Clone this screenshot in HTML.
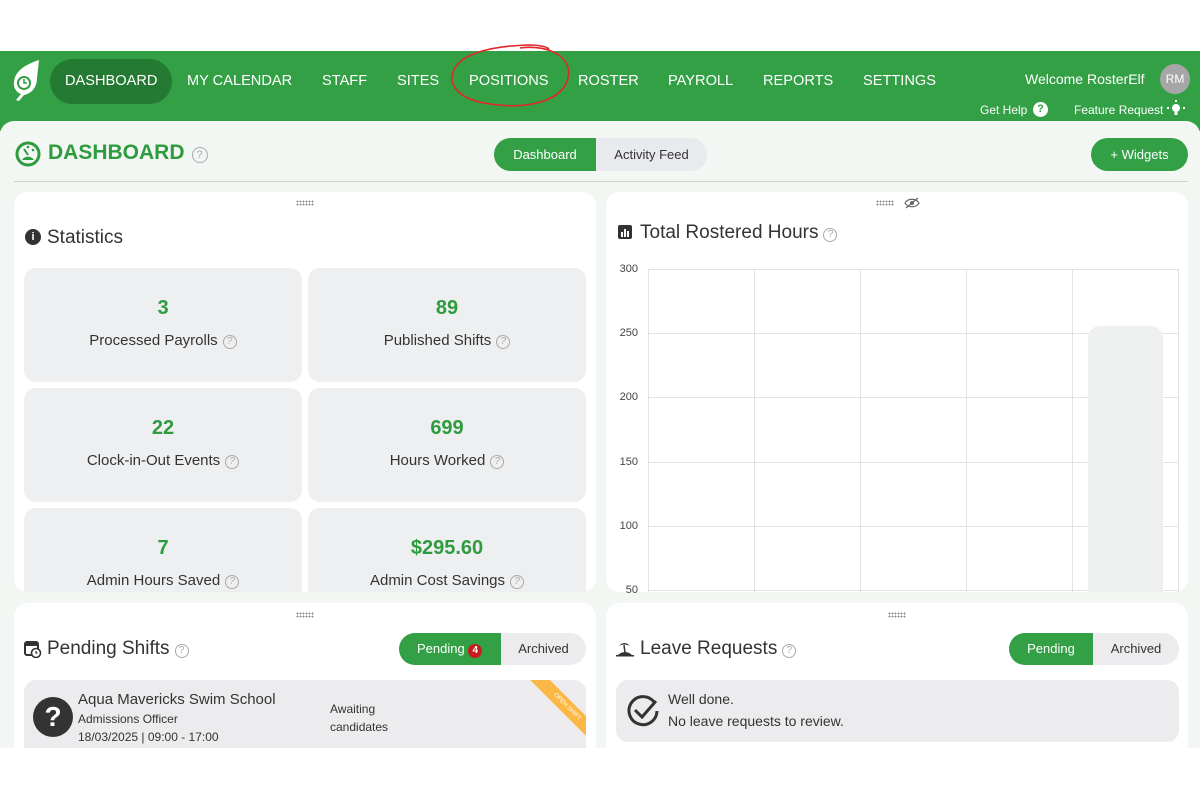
<!DOCTYPE html>
<html><head><meta charset="utf-8"><style>
*{box-sizing:border-box;margin:0;padding:0}
body{width:1200px;height:800px;background:#fff;position:relative;overflow:hidden;font-family:"Liberation Sans",Arial,sans-serif;color:#333}
.a{position:absolute}
.hdr{left:0;top:51px;width:1200px;height:80px;background:#33a046}
.nav{top:73px;color:#fff;font-size:14.6px}
.panel{left:0;top:121px;width:1200px;height:627px;background:#f3f7f3;border-radius:14px 14px 0 0}
.card{background:#fff;border-radius:14px}
.tile{background:#eeeff0;border-radius:12px;text-align:center}
.tile b{display:block;color:#2e9b3f;font-size:20px;margin-top:29px}
.tile span{display:block;font-size:15px;margin-top:12px;color:#333}
.q{display:inline-block;width:14px;height:14px;border:1.3px solid #aaa;border-radius:50%;color:#aaa;font-size:10px;line-height:12px;text-align:center;vertical-align:1px;margin-left:5px;font-weight:normal}
.grip{width:18px;height:6px;background-image:radial-gradient(circle,#888 0.8px,transparent 1px);background-size:3px 3px}
.gl{background:#e2e2e2}
.yl{font-size:11px;color:#444;left:600px;width:38px;text-align:right}
</style></head><body>
<div class="a hdr"></div>
<svg class="a" style="left:9px;top:58px" width="32" height="44" viewBox="0 0 32 44"><path d="M30 2 C18 6 6 12 5 24 C4 31 9 35 12 36 L7 42 L10 43 L15 37 C24 35 28 28 28 20 Z" fill="#fff"/><circle cx="15" cy="25" r="7" fill="#33a046"/><circle cx="15" cy="25" r="5" fill="#fff"/><path d="M15 21v4h3" stroke="#33a046" stroke-width="1.6" fill="none"/></svg>
<div class="a" style="left:50px;top:59px;width:122px;height:45px;background:#247a33;border-radius:23px"></div>
<div class="a nav" style="left:65px">DASHBOARD</div>
<div class="a nav" style="left:187px">MY CALENDAR</div>
<div class="a nav" style="left:322px">STAFF</div>
<div class="a nav" style="left:397px">SITES</div>
<div class="a nav" style="left:469px">POSITIONS</div>
<div class="a nav" style="left:578px">ROSTER</div>
<div class="a nav" style="left:668px">PAYROLL</div>
<div class="a nav" style="left:763px">REPORTS</div>
<div class="a nav" style="left:863px">SETTINGS</div>
<svg class="a" style="left:445px;top:40px" width="130" height="76"><path d="M75 8 C105 4 128 18 123 38 C118 60 85 70 45 64 C15 60 3 46 8 32 C13 16 40 6 85 5 C95 5 102 7 104 9" stroke="#e02828" stroke-width="1.6" fill="none"/></svg>
<div class="a" style="left:1025px;top:71px;color:#fff;font-size:14px">Welcome RosterElf</div>
<div class="a" style="left:1160px;top:64px;width:30px;height:30px;border-radius:50%;background:#a6a6a6;color:#fff;font-size:12px;text-align:center;line-height:30px">RM</div>
<div class="a" style="left:980px;top:103px;color:#fff;font-size:12px">Get Help</div>
<div class="a" style="left:1033px;top:102px;width:15px;height:15px;border-radius:50%;background:#fff;color:#33a046;font-size:11px;font-weight:bold;text-align:center;line-height:15px">?</div>
<div class="a" style="left:1074px;top:103px;color:#fff;font-size:12px">Feature Request</div>
<svg class="a" style="left:1167px;top:100px" width="18" height="18"><circle cx="9" cy="8" r="4" fill="#fff"/><rect x="7.5" y="12" width="3" height="3" fill="#fff"/><rect x="0" y="7" width="2" height="2" fill="#fff"/><rect x="16" y="7" width="2" height="2" fill="#fff"/><rect x="8" y="0" width="2" height="2" fill="#fff"/></svg>

<div class="a panel"></div>
<svg class="a" style="left:15px;top:141px" width="26" height="26" viewBox="0 0 26 26"><circle cx="13" cy="13" r="11" fill="none" stroke="#2e9b3f" stroke-width="3"/><path d="M7 19 A7 7 0 0 1 19 19Z" fill="#2e9b3f"/><path d="M13 14 L9 8" stroke="#2e9b3f" stroke-width="2"/><circle cx="13" cy="6" r="1.3" fill="#2e9b3f"/><circle cx="18" cy="9" r="1.3" fill="#2e9b3f"/></svg>
<div class="a" style="left:48px;top:141px;font-size:21px;font-weight:bold;color:#2e9b3f">DASHBOARD<span class="q" style="margin-left:7px;width:16px;height:16px;line-height:14px;font-size:11px">?</span></div>
<div class="a" style="left:494px;top:138px;width:213px;height:33px;background:#e9eaee;border-radius:17px"></div>
<div class="a" style="left:494px;top:138px;width:102px;height:33px;background:#33a046;border-radius:17px 0 0 17px;color:#fff;font-size:13px;text-align:center;line-height:33px">Dashboard</div>
<div class="a" style="left:596px;top:138px;width:111px;height:33px;font-size:13px;text-align:center;line-height:33px;color:#333">Activity Feed</div>
<div class="a" style="left:1091px;top:138px;width:97px;height:33px;background:#33a046;border-radius:17px;color:#fff;font-size:13px;text-align:center;line-height:33px">+ Widgets</div>
<div class="a" style="left:14px;top:181px;width:1174px;height:1px;background:#cfd3cf"></div>

<div class="a card" style="left:14px;top:192px;width:582px;height:400px"></div>
<div class="a grip" style="left:296px;top:200px"></div>
<div class="a" style="left:25px;top:229px;width:16px;height:16px;border-radius:50%;background:#333;color:#fff;font-size:11px;font-weight:bold;text-align:center;line-height:16px">i</div>
<div class="a" style="left:47px;top:227px;font-size:19px">Statistics</div>
<div class="a tile" style="left:24px;top:268px;width:278px;height:114px"><b>3</b><span>Processed Payrolls<i class="q">?</i></span></div>
<div class="a tile" style="left:308px;top:268px;width:278px;height:114px"><b>89</b><span>Published Shifts<i class="q">?</i></span></div>
<div class="a tile" style="left:24px;top:388px;width:278px;height:114px"><b>22</b><span>Clock-in-Out Events<i class="q">?</i></span></div>
<div class="a tile" style="left:308px;top:388px;width:278px;height:114px"><b>699</b><span>Hours Worked<i class="q">?</i></span></div>
<div class="a tile" style="left:24px;top:508px;width:278px;height:84px;border-radius:12px 12px 0 0"><b>7</b><span>Admin Hours Saved<i class="q">?</i></span></div>
<div class="a tile" style="left:308px;top:508px;width:278px;height:84px;border-radius:12px 12px 0 0"><b>$295.60</b><span>Admin Cost Savings<i class="q">?</i></span></div>

<div class="a card" style="left:606px;top:192px;width:582px;height:400px;overflow:hidden"></div>
<div class="a grip" style="left:876px;top:200px"></div>
<svg class="a" style="left:904px;top:197px" width="16" height="12"><path d="M1 6 C4 1 12 1 15 6 C12 11 4 11 1 6Z" fill="none" stroke="#666" stroke-width="1.2"/><circle cx="8" cy="6" r="2" fill="#666"/><path d="M2 11 L14 1" stroke="#666" stroke-width="1.2"/></svg>
<svg class="a" style="left:618px;top:225px" width="15" height="15"><rect x="0" y="0" width="14" height="14" rx="2" fill="#333"/><rect x="3" y="7" width="2" height="5" fill="#fff"/><rect x="6" y="4" width="2" height="8" fill="#fff"/><rect x="9" y="6" width="2" height="6" fill="#fff"/></svg>
<div class="a" style="left:640px;top:222px;font-size:19px">Total Rostered Hours<span class="q">?</span></div>
<div class="a yl" style="top:263px">300</div>
<div class="a yl" style="top:327px">250</div>
<div class="a yl" style="top:391px">200</div>
<div class="a yl" style="top:456px">150</div>
<div class="a yl" style="top:520px">100</div>
<div class="a yl" style="top:584px">50</div>
<div class="a gl" style="left:648px;top:269px;width:530px;height:1px"></div>
<div class="a gl" style="left:648px;top:333px;width:530px;height:1px"></div>
<div class="a gl" style="left:648px;top:397px;width:530px;height:1px"></div>
<div class="a gl" style="left:648px;top:462px;width:530px;height:1px"></div>
<div class="a gl" style="left:648px;top:526px;width:530px;height:1px"></div>
<div class="a gl" style="left:648px;top:590px;width:530px;height:1px"></div>
<div class="a gl" style="left:648px;top:269px;width:1px;height:323px"></div>
<div class="a gl" style="left:754px;top:269px;width:1px;height:323px"></div>
<div class="a gl" style="left:860px;top:269px;width:1px;height:323px"></div>
<div class="a gl" style="left:966px;top:269px;width:1px;height:323px"></div>
<div class="a gl" style="left:1072px;top:269px;width:1px;height:323px"></div>
<div class="a gl" style="left:1178px;top:269px;width:1px;height:323px"></div>
<div class="a" style="left:1088px;top:326px;width:75px;height:266px;background:#eeefef;border-radius:12px 12px 0 0"></div>

<div class="a card" style="left:14px;top:603px;width:582px;height:145px;border-radius:14px 14px 0 0"></div>
<div class="a grip" style="left:296px;top:612px"></div>
<svg class="a" style="left:24px;top:640px" width="18" height="18"><rect x="1" y="2" width="13" height="13" rx="2" fill="none" stroke="#333" stroke-width="2"/><rect x="1" y="2" width="13" height="4" fill="#333"/><circle cx="12" cy="13" r="4.5" fill="#fff" stroke="#333" stroke-width="1.6"/><path d="M12 11v2h1.5" stroke="#333" stroke-width="1.2" fill="none"/></svg>
<div class="a" style="left:47px;top:638px;font-size:19px">Pending Shifts<span class="q">?</span></div>
<div class="a" style="left:399px;top:633px;width:187px;height:32px;background:#ececee;border-radius:16px"></div>
<div class="a" style="left:399px;top:633px;width:102px;height:32px;background:#33a046;border-radius:16px 0 0 16px;color:#fff;font-size:13px;line-height:32px;padding-left:18px">Pending <span style="display:inline-block;width:14px;height:14px;border-radius:50%;background:#c81b1b;font-size:10px;text-align:center;line-height:14px;font-weight:bold">4</span></div>
<div class="a" style="left:501px;top:633px;width:85px;height:32px;font-size:13px;line-height:32px;text-align:center">Archived</div>
<div class="a" style="left:24px;top:680px;width:562px;height:68px;background:#ececee;border-radius:12px 12px 0 0;overflow:hidden"><div class="a" style="left:498px;top:20px;width:90px;height:14px;background:#fbb846;transform:rotate(45deg);color:#fff;font-size:6px;text-align:center;line-height:14px">OPEN SHIFT</div></div>
<div class="a" style="left:33px;top:697px;width:40px;height:40px;border-radius:50%;background:#333;color:#fff;font-size:28px;font-weight:bold;text-align:center;line-height:40px">?</div>
<div class="a" style="left:78px;top:691px;font-size:15px">Aqua Mavericks Swim School</div>
<div class="a" style="left:78px;top:712px;font-size:12px">Admissions Officer</div>
<div class="a" style="left:78px;top:730px;font-size:12px">18/03/2025 | 09:00 - 17:00</div>
<div class="a" style="left:330px;top:700px;font-size:12px;line-height:18px">Awaiting<br>candidates</div>

<div class="a card" style="left:606px;top:603px;width:582px;height:145px;border-radius:14px 14px 0 0"></div>
<div class="a grip" style="left:888px;top:612px"></div>
<svg class="a" style="left:616px;top:641px" width="18" height="16"><path d="M2 14 C6 10 12 10 16 14Z" fill="#333"/><path d="M9 12 L8 4" stroke="#333" stroke-width="1.5"/><path d="M3 5 C6 1 11 1 14 5 C11 3 6 3 3 5Z" fill="#333"/><rect x="0" y="14" width="18" height="1.5" fill="#333"/></svg>
<div class="a" style="left:640px;top:638px;font-size:19px">Leave Requests<span class="q">?</span></div>
<div class="a" style="left:1009px;top:633px;width:170px;height:32px;background:#ececee;border-radius:16px"></div>
<div class="a" style="left:1009px;top:633px;width:84px;height:32px;background:#33a046;border-radius:16px 0 0 16px;color:#fff;font-size:13px;line-height:32px;text-align:center">Pending</div>
<div class="a" style="left:1093px;top:633px;width:86px;height:32px;font-size:13px;line-height:32px;text-align:center">Archived</div>
<div class="a" style="left:616px;top:680px;width:563px;height:62px;background:#ececee;border-radius:12px"></div>
<svg class="a" style="left:626px;top:694px" width="36" height="34"><path d="M28 8 A14 14 0 1 0 31 17" fill="none" stroke="#333" stroke-width="3"/><path d="M9 16 L16 23 L30 7" fill="none" stroke="#333" stroke-width="3"/></svg>
<div class="a" style="left:668px;top:691px;font-size:14px">Well done.</div>
<div class="a" style="left:668px;top:713px;font-size:14px">No leave requests to review.</div>
</body></html>
